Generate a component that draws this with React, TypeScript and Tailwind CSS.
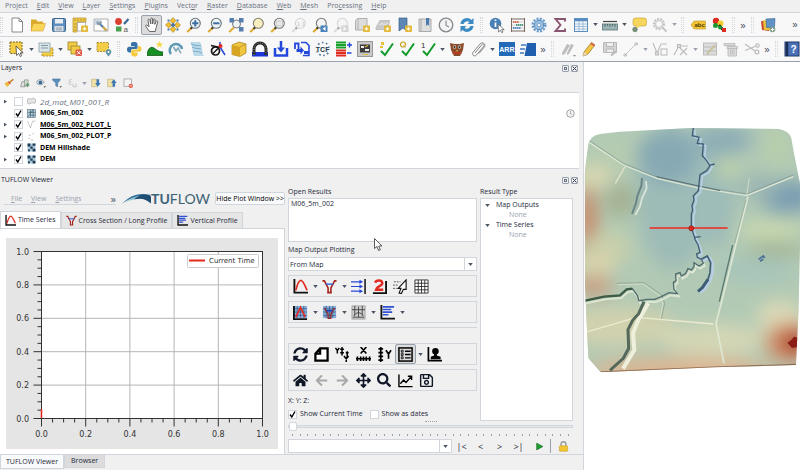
import { useState } from "react";
import type { ReactNode } from "react";
import clsx from "clsx";
import {
  FaArrowLeft,
  FaArrowRight,
  FaArrowsAlt,
  FaHome,
  FaRegSave,
  FaSearch,
  FaSyncAlt,
} from "react-icons/fa";

const badge = (
  <g>
    <rect x="9" y="8.5" width="7" height="6.5" rx="1" fill="#e3b93c" />
    <path d="M12.5 10v3.6M10.7 11.8h3.6" stroke="#fffbe2" strokeWidth="1.2" />
  </g>
);

const lens = (stroke: string, handle: string, fill = "#eef3f6") => (
  <g>
    <path d="M6 10.5 1.2 15" stroke={handle} strokeWidth="2.2" />
    <path d="M6 10.5 4.6 11.8" stroke="#333" strokeWidth="2.2" />
    <circle cx="9.3" cy="6.3" r="5" fill={fill} stroke={stroke} strokeWidth="1.1" />
  </g>
);

const check = <path d="M3 10 7 14 15 2.5" fill="none" stroke="#129a2b" strokeWidth="2" />;

const funnel = (
  <g fill="none">
    <path d="M.5 2h2l4 7.500v5M15.500 2h-2l-4 7.500v5M5.500 14.500h5" stroke="#a3231c" strokeWidth="1.700" />
    <path d="M4 5.500h8" stroke="#2f62d9" strokeWidth="1.500" />
  </g>
);

const mesh = (
  <g>
    <rect x="1" y="1" width="14" height="13" fill="#86b0dd" />
    <path d="M1 4h14M1 7.5h14M1 11h14M4.5 1v13M8 1v13M11.5 1v13" stroke="#2a4468" strokeWidth=".6" />
  </g>
);

const icons: Record<string, ReactNode> = {
  new: (
    <path d="M3 1h7l3.5 3.5V15H3zM10 1v3.5h3.5" fill="#fff" stroke="#8a8a8a" strokeWidth="1" />
  ),
  open: (
    <g>
      <path d="M1 2.5h5l1.5 2H13V14H1z" fill="#dba92c" />
      <path d="M3 6.5h12.5L13 14H1z" fill="#f8d65a" stroke="#d5a32a" strokeWidth=".6" />
    </g>
  ),
  save: (
    <g>
      <rect x="1.5" y="1.5" width="13" height="13" rx="1" fill="#5d8fc0" stroke="#3c668f" />
      <rect x="4" y="2" width="8" height="4.5" fill="#e9eef2" />
      <rect x="3.5" y="9" width="9" height="5.5" fill="#d9dfe4" />
      <path d="M5 11h6M5 12.8h6" stroke="#7b8892" strokeWidth=".7" />
    </g>
  ),
  layout: (
    <g>
      <path d="M1 1h13v4H5v10H1z" fill="#f1cc4d" stroke="#b28d28" strokeWidth=".7" />
      <path d="M5.5 5.5h8V14h-8z" fill="#fff" stroke="#999" strokeWidth=".7" />
      <path d="M3 2v2M6 2v2M9 2v2M12 2v2M2 7h2M2 10h2M2 13h2" stroke="#8a6a17" strokeWidth=".6" />
      {badge}
    </g>
  ),
  layouts: (
    <g>
      <path d="M1 2h14v12H1z" fill="#fff" stroke="#999" strokeWidth=".8" />
      <path d="M2 3h6L5 8H2z" fill="#c5d5e3" />
      <path d="m6 6 7.5 7.5" stroke="#5984ad" strokeWidth="2.2" />
      <path d="M4 4.2a2.6 2.6 0 1 0 3.6-.8L7 5.5z" fill="#8b9aa7" />
      <path d="m10 10 3.5 3.5" stroke="#dfb13a" strokeWidth="2" />
    </g>
  ),
  styles: (
    <g>
      <circle cx="4.5" cy="4.5" r="3.4" fill="#d9402f" />
      <path d="m10 7 4.5-5" stroke="#3d6894" strokeWidth="2.2" />
      <rect x="2" y="9.5" width="5.5" height="5" fill="#4aa04d" />
      <text x="9.5" y="14.5" fontSize="8" fill="#555">a</text>
    </g>
  ),
  hand: (
    <path d="M5.5 14.5 1.8 9.3c-.6-1 .7-1.8 1.5-1L5 9.8 4 3.3c0-1.2 1.5-1.4 1.8-.2L6.8 7V2c0-1.3 1.8-1.3 1.8 0v5l.8-4.3c.3-1.1 1.8-.9 1.7.3L10.8 7.4l1.3-3c.5-1 1.9-.5 1.6.7l-1.5 5.4-1 4z" fill="#fff" stroke="#555" strokeWidth=".9" />
  ),
  pan: (
    <g fill="#f0bd33">
      <path d="m8 .5 3 3.2L8 7 5 3.700zM8 9l3 3.200L8 15.500l-3-3.300zM.5 8l3.200-3L7 8l-3.300 3zM9 8l3.300-3L15.500 8l-3.200 3z" stroke="#97721b" strokeWidth=".5" />
      <path d="M8 5.500 10.500 8 8 10.500 5.500 8z" fill="#4a79aa" />
      <path d="M2.500 2.500h2v2h-2zM11.500 2.500h2v2h-2zM2.500 11.500h2v2h-2zM11.500 11.500h2v2h-2z" fill="#4a79aa" />
    </g>
  ),
  zoomIn: (
    <g>
      {lens("#69737a", "#e0ab35")}
      <path d="M9.300 3.200v6.200M6.200 6.300h6.200" stroke="#3a6da3" strokeWidth="2" />
    </g>
  ),
  zoomOut: (
    <g>
      {lens("#69737a", "#e0ab35")}
      <path d="M6.200 6.300h6.200" stroke="#3a6da3" strokeWidth="2" />
    </g>
  ),
  zoomFull: (
    <g>
      <path d="M6 10.500 1.200 15" stroke="#e0ab35" strokeWidth="2" />
      <circle cx="8.500" cy="7" r="4" fill="#eef3f6" stroke="#777" />
      <path d="M1.500 1h4.500v4.500H1.500zM11 1h4.500v4.500H11zM11 10h4.500v4.500H11z" fill="#557fac" />
    </g>
  ),
  zoomSel: lens("#7d7d6a", "#e0ab35", "#f7edc0"),
  zoomLayer: (
    <g>
      {lens("#777", "#e0ab35", "#f4f4f4")}
      <path d="M6 4h6.500v5H6z" fill="#e4e8ea" stroke="#aaa" strokeWidth=".5" />
    </g>
  ),
  zoomNative: (
    <g opacity=".45">
      {lens("#aaa", "#bbb", "#f2f2f2")}
      <text x="6" y="8.800" fontSize="6" fill="#888">1:1</text>
    </g>
  ),
  zoomLast: (
    <g>
      {lens("#777", "#e0ab35", "#f4f4f4")}
      <rect x="8.500" y="8.500" width="7" height="6.500" fill="#4a83ba" />
      <path d="m13.500 9.500-3 2.300 3 2.200z" fill="#fff" />
    </g>
  ),
  zoomNext: (
    <g opacity=".45">
      {lens("#aaa", "#bbb", "#f2f2f2")}
      <rect x="8.500" y="8.500" width="7" height="6.500" fill="#aaa" />
      <path d="m10.500 9.500 3 2.300-3 2.200z" fill="#fff" />
    </g>
  ),
  mapView: (
    <g>
      <path d="M1.500 3.500 3.500 1.500h9.500v11.500h-11.500z" fill="#dcdcdc" stroke="#a0a0a0" strokeWidth=".8" />
      <path d="M4 2v11" stroke="#b5b5b5" />
      {badge}
    </g>
  ),
  view3d: (
    <g>
      <path d="M1 10.500 5 3.500h9.500l-1.500 9H1z" fill="#c9c9c9" stroke="#aaa" strokeWidth=".6" />
      <path d="M4 8c2-3 6 1 9-2" fill="none" stroke="#eee" />
      {badge}
    </g>
  ),
  bookmarkNew: (
    <g>
      <path d="M3 1h8v13l-4-3-4 3z" fill="#5c86b4" stroke="#3b618b" strokeWidth=".7" />
      {badge}
    </g>
  ),
  bookmarks: (
    <g>
      <path d="M2 2h12v12.500H2z" fill="#dedede" stroke="#999" strokeWidth=".8" />
      <path d="M4 2v12" stroke="#aaa" />
      <path d="M9 1h3.200v8l-1.600-1.500L9 9z" fill="#4b7aad" />
    </g>
  ),
  clock: (
    <g fill="none" stroke="#82888c">
      <circle cx="8" cy="8" r="6.800" fill="#f4f4f4" strokeWidth="1.300" />
      <path d="M8 3.500V8.500l3 1.500" strokeWidth="1.100" />
    </g>
  ),
  refresh: (
    <g fill="#3c8ac2">
      <path d="M1.500 7A6.500 6.500 0 0 1 12.500 3L14.500 1v6h-6l2-2A4 4 0 0 0 4.500 7z" />
      <path d="M14.500 9A6.500 6.500 0 0 1 3.500 13l-2 2V9h6l-2 2a4 4 0 0 0 6-2z" />
    </g>
  ),
  info: (
    <g>
      <circle cx="6.500" cy="6.500" r="5.800" fill="#4a80b8" />
      <path d="M6.500 5.500v4.500M6.500 2.500v1.600" stroke="#fff" strokeWidth="1.700" />
      <path d="m9 7 .500 8 1.900-1.800 1.300 2.500 1.300-.7-1.300-2.400h2.500z" fill="#fff" stroke="#555" strokeWidth=".7" />
    </g>
  ),
  abacus: (
    <g fill="none">
      <path d="M1.500 1v14M14.500 1v14M1.500 2h13M1.500 14h13" stroke="#7d6a63" />
      <path d="M2 5h12M2 8h12M2 11h12" stroke="#bbb" strokeWidth=".6" />
      <path d="M3 5h6" stroke="#d66f56" strokeWidth="2" strokeDasharray="1.500 .5" />
      <path d="M6 8h7" stroke="#4f9a83" strokeWidth="2" strokeDasharray="1.500 .5" />
      <path d="M3 11h8" stroke="#5b8fc4" strokeWidth="2" strokeDasharray="1.500 .5" />
    </g>
  ),
  gear: (
    <g>
      <circle cx="8" cy="8" r="6.300" fill="none" stroke="#6a9ccb" strokeWidth="2.400" strokeDasharray="2 1.300" />
      <circle cx="8" cy="8" r="4.700" fill="#9bc1e2" stroke="#4f83b6" strokeWidth="1" />
      <circle cx="8" cy="8" r="1.800" fill="#f4f7f9" stroke="#4f83b6" strokeWidth=".6" />
    </g>
  ),
  sigma: <path d="M13 4.500V2H3.500l5 6-5 6H13v-2.500" fill="none" stroke="#8a5570" strokeWidth="1.900" />,
  table: (
    <g>
      <rect x="1.500" y="1.500" width="13" height="13" fill="#f4f8fb" stroke="#5b8dc0" />
      <path d="M2 3h12" stroke="#5b8dc0" strokeWidth="2.600" />
      <path d="M2 7h12M2 9.500h12M2 12h12M6 4v10M10 4v10" stroke="#8db1d3" strokeWidth=".8" />
    </g>
  ),
  ruler: (
    <g>
      <path d="M1 4.500h14" stroke="#444" strokeWidth="1.200" />
      <rect x=".5" y="7" width="15" height="6" fill="#9cb4b5" stroke="#5e7577" strokeWidth=".8" />
      <path d="M3 7v3M5.500 7v2M8 7v3M10.500 7v2M13 7v3" stroke="#40595b" strokeWidth=".7" />
    </g>
  ),
  tip: (
    <g>
      <rect x="2" y="1" width="13.500" height="8" rx="2.500" fill="#f6d65c" stroke="#c6a02c" strokeWidth=".6" />
      <path d="m6 8-1 4 5-3.500z" fill="#f6d65c" />
      <circle cx="4" cy="12.500" r="2.300" fill="#7c957f" stroke="#506d58" strokeWidth=".6" />
    </g>
  ),
  locator: (
    <g fill="none" stroke="#c4c4c4">
      <circle cx="7" cy="7" r="5" strokeWidth="2.200" strokeDasharray="2 1" />
      <circle cx="7" cy="7" r="3.500" />
      <path d="m10.500 10.500 4 4" strokeWidth="2" />
    </g>
  ),
  abc: (
    <g>
      <path d="M1 8 4 4h11.500v8H4z" fill="#f2c437" stroke="#c09821" strokeWidth=".6" />
      <text x="4.500" y="10.300" fontSize="6" fontWeight="700" fill="#4b3b08">abc</text>
    </g>
  ),
  diagram: (
    <g>
      <circle cx="5" cy="4" r="3.200" fill="#de2b20" />
      <circle cx="9.500" cy="6.500" r="3" fill="#f2cc2c" />
      <circle cx="4.500" cy="8.500" r="2.500" fill="#189a30" />
      <path d="M8 8 13 14" stroke="#111" strokeWidth="2.600" />
      <rect x="11" y="11" width="4" height="4" fill="#de2b20" />
      <circle cx="9" cy="10.500" r="2" fill="#189a30" />
    </g>
  ),
  dataSource: (
    <g>
      <path d="m1 4 9 1-1 9-7-1z" fill="#c9492f" />
      <path d="m3 3 8 1-1 9H4z" fill="#ecc23c" />
      <path d="m6 2 9-.500-.500 9H6.500z" fill="#5f93c8" stroke="#38638f" strokeWidth=".6" />
      <circle cx="12.500" cy="12.500" r="2.800" fill="#7d9e8a" />
      <path d="M12.500 10.800v3.400M10.800 12.500h3.400" stroke="#fff" />
    </g>
  ),
  select: (
    <g>
      <rect x="1" y="1" width="12" height="11.500" fill="#f3cd46" stroke="#7e6b2a" strokeWidth="1" strokeDasharray="2 1" />
      <path d="m7 5 .500 9.500 2.200-2 1.500 3 1.500-.800-1.500-2.800h3z" fill="#fff" stroke="#444" strokeWidth=".8" />
    </g>
  ),
  selectForm: (
    <g>
      <rect x="4" y="7" width="11" height="8" fill="#f3cd46" stroke="#9a802c" strokeWidth=".8" strokeDasharray="2 1" />
      <rect x="1" y="2" width="11" height="9" fill="#dce5e8" stroke="#8aa0a7" strokeWidth=".8" />
      <path d="M3 4.500h7M3 7h7" stroke="#819aa8" strokeWidth="1.200" />
    </g>
  ),
  deselect: (
    <g>
      <rect x="1" y="1" width="9" height="8" fill="#f3cd46" stroke="#9a802c" strokeWidth=".8" />
      <rect x="4" y="5" width="9" height="8" fill="#f3cd46" stroke="#9a802c" strokeWidth=".8" />
      <rect x="8.500" y="8.500" width="6.500" height="6.500" rx="1" fill="#e05a4c" />
      <path d="m10 10 3.500 3.500M13.500 10 10 13.500" stroke="#fff" />
    </g>
  ),
  selectLoc: (
    <g>
      <rect x="1" y="1.500" width="11.500" height="9" fill="#f3cd46" stroke="#9a802c" strokeWidth=".8" strokeDasharray="2 1" />
      <path d="M12.500 15.500c-1.500-2-2.800-3-2.800-4.500a2.800 2.800 0 0 1 5.600 0c0 1.500-1.300 2.500-2.800 4.500z" fill="#5f93a8" />
      <circle cx="12.500" cy="11" r="1" fill="#fff" />
    </g>
  ),
  python: (
    <g>
      <path d="M8 1C5 1 5 2.300 5 3.500V5h3.500v.800H3C1.500 5.800 1 7.300 1 8.700 1 10.500 2 11.500 3.500 11.500H5V9.500C5 8.500 6 8 7 8h3c1 0 1.500-.700 1.500-1.500v-3C11.500 1.500 10 1 8 1z" fill="#3873a8" />
      <path d="M8.500 15.500c3 0 3-1.300 3-2.500v-1.500H8v-.800h5.500c1.500 0 2-1.500 2-2.900 0-1.800-1-2.800-2.500-2.800h-1v2.500C12 8 11 8.500 10 8.500H7c-1 0-1.700.7-1.700 1.500v3c0 1.800 1.300 2.500 3.200 2.500z" fill="#f5cb3f" />
    </g>
  ),
  terrain: (
    <g>
      <path d="M0 13.500C1 7 4 5 7 7s4 3.500 9 4v3.500H0z" fill="#168f23" stroke="#0c4c12" strokeWidth=".7" />
      <path d="m12.500 0 .900 2.300 2.600.200-2 1.700.6 2.500-2.100-1.500-2.300 1.500.7-2.500-2-1.700 2.600-.200z" fill="#f5d74a" />
    </g>
  ),
  swirl: (
    <g fill="none">
      <path d="M3 13A6.200 6.200 0 1 1 14 8" stroke="#5d99b5" strokeWidth="2.500" />
      <path d="m5.500 6 2.500 4 2-3 3 5.500" stroke="#7ca6b6" strokeWidth="1.500" />
    </g>
  ),
  sheet: (
    <g>
      <path d="M1 1h10c3 4 1 9 4 14H5C3 10 4 6 1 1z" fill="#bcd9e8" />
      <path d="M2 3c4 2 6 1 10 2M3 6c4 2 6 1 9 2M4 10c3 1 6 0 9 2" fill="none" stroke="#6da8ca" strokeWidth=".9" />
    </g>
  ),
  node: (
    <g fill="none" stroke="#161616">
      <circle cx="5.500" cy="10" r="4" strokeWidth="1.700" />
      <path d="m3 12.500 5-5M1 4.500 10 6.500" strokeWidth="1.500" />
      <path d="M10 1v5l5 8" stroke="#2546d8" strokeWidth="1.500" />
      <circle cx="10.500" cy="5" r="2" fill="#e02b20" stroke="none" />
    </g>
  ),
  cube: (
    <g>
      <path d="M1 4 8 1l7 2v9l-6 3.500-8-2z" fill="#f0c640" stroke="#a4801c" strokeWidth=".7" />
      <path d="m1 4 8 2v9.500l-8-2z" fill="#d7a521" />
      <path d="m9 6 6-3" fill="none" stroke="#c1962a" />
    </g>
  ),
  culvert: (
    <g>
      <rect y="11" width="16" height="4.500" fill="#1b35d6" />
      <path d="M2 14V8a6 6 0 0 1 12 0v6" fill="none" stroke="#262626" strokeWidth="3" />
      <path d="M2 14V8a6 6 0 0 1 12 0v6" fill="none" stroke="#999" strokeDasharray="1 1.500" />
    </g>
  ),
  download: (
    <g fill="none" stroke="#2448dc" strokeWidth="2.500">
      <path d="M2 7v7.500h12V7M8 0v8" />
      <path d="M4 6.500h8L8 11.500z" fill="#2448dc" stroke="none" />
    </g>
  ),
  downloadFile: (
    <g>
      <path d="M1 8V2.500h3.500V8" fill="none" stroke="#2448dc" strokeWidth="1.800" />
      <path d="M2.500 8h4V5.500L10 9.500l-3.500 4V11h-4z" fill="#2448dc" />
      <path d="M7 1.500h5l3 3V14.500H9" fill="none" stroke="#2448dc" strokeWidth="1.600" />
      <path d="M10 11.500h5" stroke="#2448dc" strokeWidth="3" />
    </g>
  ),
  tcf: (
    <g>
      <circle cx="8" cy="8" r="6.500" fill="none" stroke="#54799b" strokeWidth="1.700" strokeDasharray="1.600 2.500" />
      <rect y="5.500" width="16" height="5" fill="#f6f6f6" />
      <text x=".8" y="10.500" fontSize="7" fontWeight="700" fill="#223a50">TCF</text>
    </g>
  ),
  bands: (
    <g>
      <path d="M0 1.500h10M0 4h10M0 6.500h10" stroke="#18a22c" strokeWidth="2" />
      <path d="M0 9.500h10M0 12h10M0 14.500h10" stroke="#df2b20" strokeWidth="2" />
      <path d="M11 4h5M13.500 1.500v5M11 12h4.500" stroke="#2546d8" strokeWidth="1.500" />
    </g>
  ),
  terminal: (
    <g>
      <rect x=".5" y=".5" width="15" height="15" fill="#c9c9c9" stroke="#999" />
      <rect x="3" y="3.500" width="10" height="8" fill="#3c3c3c" />
      <path d="M4 5h3v2H4zM8 8h4v2H8z" fill="#eee" />
      <path d="m8 6 3-1.500M6 13.500h5" stroke="#e0b93d" strokeWidth="1.200" />
    </g>
  ),
  checkDb: (
    <g>
      {check}
      <path d="M3 1h3v3H3zM2 5h3v2H2z" fill="#e9bf3e" />
    </g>
  ),
  checkQ: (
    <g>
      {check}
      <circle cx="4" cy="3.500" r="2.500" fill="none" stroke="#c7a021" strokeWidth="1.200" />
      <path d="m4.500 4.500 2 2" stroke="#c7a021" />
    </g>
  ),
  checkOne: (
    <g>
      {check}
      <text x="1" y="6.500" fontSize="8" fill="#333">1</text>
    </g>
  ),
  owl: (
    <g>
      <path d="m1 2 4 1h6l4-1-1 7-3 6H5L2 9z" fill="#8a4b2b" />
      <circle cx="5.500" cy="6" r="1.700" fill="#e7d8c7" />
      <circle cx="10.500" cy="6" r="1.700" fill="#e7d8c7" />
      <circle cx="5.500" cy="6" r="1" fill="#222" />
      <circle cx="10.500" cy="6" r="1" fill="#222" />
      <path d="m7 9 1 2 1-2z" fill="#e6b33c" />
      <path d="M3.500 12h9" stroke="#c23a2a" strokeWidth="1.500" />
    </g>
  ),
  clip: (
    <path d="m5 12 7-8.500c1-1.300 3 .2 2 1.500L6.500 14c-2 2.200-5.300-.3-3.500-2.700L10 3c2.500-3 6.500.3 4.200 3.200L9 12.500" fill="none" stroke="#8a8a8a" strokeWidth="1" />
  ),
  arr: (
    <g>
      <rect y="1" width="16" height="14" fill="#2269b8" />
      <text x=".3" y="11" fontSize="7" fontWeight="700" fill="#fff">ARR</text>
    </g>
  ),
  speed: (
    <g fill="#1f5fae">
      <path d="M7 2h9v13H4.500z" />
      <path d="M1 4h5M0 8h5M0 12h4" stroke="#3d79bf" strokeWidth="1.300" />
    </g>
  ),
  edits: (
    <g fill="#bdbdbd">
      <path d="m2 12 5-9 3 1-5 9-3 1zM7 12l4-9 3 1-5 9-2 1z" />
      <path d="M13 14h3l-1.500 1.800z" fill="#888" />
    </g>
  ),
  pencil: (
    <g>
      <path d="M3 11 10.500 1.500l3.500 2.500L6.500 13.500 2 15z" fill="#f2c645" stroke="#93701d" strokeWidth=".7" />
      <path d="m3 11 3.500 2.500L2 15z" fill="#e8d5bb" />
      <path d="m10.500 1.500 3.500 2.500-1.200 1.600-3.500-2.500z" fill="#d96552" />
    </g>
  ),
  saveEdits: (
    <g fill="none" stroke="#b9b9b9">
      <path d="M1.500 1.500h13v10h-13z" fill="#d4d4d4" />
      <path d="M4.500 2v3.500h7V2M4.500 11V8h7v3" fill="#eee" />
      <path d="m9 14.500 5-4" strokeWidth="2" />
    </g>
  ),
  line: (
    <g stroke="#c3c3c3">
      <path d="M2 14 13 3" />
      <path d="M1 13h2.500v2H1zM12 2h2.500v2H12z" fill="#d5d5d5" />
    </g>
  ),
  vertex: (
    <g fill="none" stroke="#bdbdbd" strokeWidth="1.100">
      <path d="m1 2 4 10 4-9h6" />
      <rect x="9" y="8" width="6" height="6" />
      <path d="M3.500 11h3v3h-3z" fill="#ddd" />
    </g>
  ),
  nodeTool: (
    <g fill="none" stroke="#bdbdbd" strokeWidth="1.200">
      <path d="m1 14 5-9h9M6 3v4M7 7l7 7M14 7l-7 7" />
      <path d="M4.500 3.500h3v3h-3z" fill="#ddd" />
    </g>
  ),
  attrs: (
    <g>
      <rect x="1.500" y="2" width="13" height="12" fill="#ddd" stroke="#bbb" />
      <path d="M2 6h12M2 10h12" stroke="#bbb" />
      <path d="m5 13 8-9" stroke="#c8c39d" strokeWidth="2.200" />
    </g>
  ),
  trash: (
    <g fill="#dcdcdc" stroke="#bcbcbc" strokeWidth=".9">
      <path d="M1 2.500h11v2H1zM4 5.500h10.500v2H4zM5 7.500h8.500V15H5z" />
      <path d="M7.500 8.500v5M9.300 8.500v5M11 8.500v5" />
    </g>
  ),
  scissors: (
    <g fill="none" stroke="#bdbdbd" strokeWidth="1.200">
      <path d="m1 3 10 7M1 9.500 12 5" />
      <circle cx="13" cy="11" r="1.900" />
      <circle cx="13.500" cy="4.500" r="1.700" />
    </g>
  ),
  help: (
    <g>
      <rect x="1" y="1" width="14" height="14" fill="#4871b8" stroke="#20396b" />
      <path d="M3 1v14" stroke="#1b2c50" strokeWidth="2.500" />
      <text x="6.500" y="12" fontSize="10" fontWeight="700" fill="#fff">?</text>
    </g>
  ),
  // layer panel
  brush: (
    <g>
      <path d="m1 8 5-2 3 4-3 4C3 13 2 11 1 8z" fill="#ecb93a" />
      <path d="m6 6 3 4 2-1-3-4z" fill="#d5432e" />
      <path d="m9 7 6-5" stroke="#c58023" strokeWidth="2.500" />
    </g>
  ),
  addGroup: (
    <g>
      <path d="M3 6h5v8H1z" fill="#e0e4e0" stroke="#777" />
      <path d="M7 3h6v10H7z" fill="#cfd9cf" stroke="#7d8b7d" />
      <path d="M12 8v6M9 11h6" stroke="#5d9463" strokeWidth="2" />
    </g>
  ),
  eye: (
    <g>
      <path d="M0 7c4-6 10-6 13 0-3 5-9 5-13 0z" fill="#dfe6ea" stroke="#6b7c85" />
      <circle cx="7" cy="7" r="3" fill="#3d6a92" />
      <path d="M12 13h4l-2 2.500z" fill="#444" />
    </g>
  ),
  filter: (
    <g>
      <path d="M1 1.500h12v2L9 8v6l-3-1.500V8L1 3.500z" fill="#5b8fc1" stroke="#3c6890" strokeWidth=".8" />
      <path d="M12 13h4l-2 2.500z" fill="#444" />
    </g>
  ),
  expr: (
    <g fill="none" stroke="#bbb" strokeWidth="1.200">
      <path d="M6 2.500C1 1 1 6.500 5 6c-5 0-5 6 1 4M8 9v5h5V9" />
    </g>
  ),
  expand: (
    <g>
      <path d="M1 2h9v12H1z" fill="#efe1a6" stroke="#a99b62" strokeWidth=".7" />
      <path d="M9 2h4v6h2.500L11 14 6.500 8H9z" fill="#3d78b3" />
    </g>
  ),
  collapse: (
    <g>
      <path d="M1 2h9v12H1z" fill="#efe1a6" stroke="#a99b62" strokeWidth=".7" />
      <path d="M9 14h4V8h2.500L11 2 6.500 8H9z" fill="#3d78b3" />
    </g>
  ),
  remove: (
    <g>
      <path d="M1.500 1.500h12v12h-12z" fill="#f4f4f4" stroke="#8a8a8a" />
      <circle cx="12.500" cy="12.500" r="3.500" fill="#e35844" />
      <path d="M10.500 12.500h4" stroke="#fff" strokeWidth="1.200" />
    </g>
  ),
  polygon: <path d="M1 4c3-3 5 1 8-1s6 0 6 2v5c-2 3-5-1-8 1s-6 2-6-1z" fill="#e5e5e5" stroke="#999" />,
  meshLayer: (
    <g>
      <rect x="1" y="1" width="14" height="14" fill="#b9d0da" stroke="#4a6a7c" />
      <path d="M1 6h14M6 1v14M11 1v14M1 15 11 1M6 11h9" stroke="#3d5d70" strokeWidth="1.200" />
    </g>
  ),
  lineLayer: <path d="m1 2 5 12 4-12h5" fill="none" stroke="#9c9c9c" strokeWidth="1" />,
  points: <path d="M3 10h2v2H3zM4 5h2v2H4zM10 2h2v2h-2zM8 13h2v2H8z" fill="#aaa" />,
  raster: (
    <g>
      <rect x="1" y="1" width="14" height="14" fill="#a9c6d8" />
      <path d="M1 1h5v5H1zM10 1h5v4h-5zM6 6h4v4H6zM10 10h5v5h-5zM2 11h3v4H2z" fill="#1e3c55" />
    </g>
  ),
  // plot toolbars
  series: (
    <g fill="none">
      <path d="M1.500 0v14.500H16" stroke="#111" strokeWidth="2" />
      <path d="M3 12C5 4 7 1.500 8.500 1.500S12 5 15 12" stroke="#e32a20" strokeWidth="1.800" />
    </g>
  ),
  section: funnel,
  flow: (
    <g stroke="#2748da" fill="#2748da">
      <path d="M0 3h10M0 8h10M0 13h10" strokeWidth="1.300" />
      <path d="m9 .800 4 2.200-4 2.200zM9 5.800 13 8l-4 2.200zM9 10.800l4 2.200-4 2.200z" stroke="none" />
      <path d="M15 0v16" stroke="#111" strokeWidth="1.600" />
    </g>
  ),
  two: (
    <g fill="none">
      <path d="M1 15h14V2" stroke="#111" strokeWidth="2" />
      <path d="M3.500 4C4 1.500 6 1.500 7.500 1.500c4 0 4.500 4 1.500 5.500C6.500 8.500 4.500 9 4.200 11.500h7.800" stroke="#e32a20" strokeWidth="2.600" />
    </g>
  ),
  cursor: (
    <g>
      <path d="M1 3h7M0 6.500h6M0 10h4" stroke="#555" strokeWidth="1" strokeDasharray="2 1" />
      <path d="M14 1 5.500 10h3L6.500 15l2.500.500 2-4.500h3z" fill="#fff" stroke="#111" strokeWidth="1.200" />
    </g>
  ),
  grid: (
    <path d="M1 1h14v14H1zM1 4.500h14M1 8h14M1 11.500h14M4.500 1v14M8 1v14M11.500 1v14" fill="#fff" stroke="#222" strokeWidth=".9" />
  ),
  seriesMesh: (
    <g fill="none">
      {mesh}
      <path d="M1 1v14h14" stroke="#111" strokeWidth="2" />
      <path d="m3 13 5-10.500L13 13" stroke="#e32a20" strokeWidth="1.800" />
    </g>
  ),
  sectionMesh: (
    <g fill="none">
      {mesh}
      <path d="m2.500 3 4 6.500v4.500M13.500 3l-4 6.500v4.500M6 14.300h4" stroke="#8f2a2a" strokeWidth="1.500" />
      <path d="M5 6h6" stroke="#173fc0" strokeWidth="1.800" />
    </g>
  ),
  curtain: (
    <g fill="none" stroke="#444">
      <rect x="1" y="1" width="14" height="14" fill="#cfcfcf" stroke="#888" strokeWidth=".7" />
      <path d="M4 1v10M12 1v10M1 5h14M8 2v11M3 12c2-5 8-5 10 0M2 13h12" />
    </g>
  ),
  vertical: (
    <g>
      <path d="M1.500 0v14.500H16" fill="none" stroke="#111" strokeWidth="2" />
      <path d="M3 2h12M3 4.800h9M3 7.600h10M3 10.400h6" stroke="#3151d4" strokeWidth="1.800" />
    </g>
  ),
  clearPlot: <path d="M6.500 1.500H14.500V14.500H1.500V7zM6.500 1.500V7H1.500" fill="#fff" stroke="#000" strokeWidth="2.400" />,
  axesYY: (
    <g fill="none" stroke="#000" strokeWidth="1.600">
      <path d="m.5 1 2 3 2-3M2.500 4v3M7.500 0v9M5.500 2.500h4M5.500 6h4M13 4.500V11M11.500 6h3M9.500 9.500l2.500 3 2.500-3M12 12.500V16" />
    </g>
  ),
  axesX: (
    <g fill="none" stroke="#000" strokeWidth="1.800">
      <path d="m5 0 6 7M11 0 5 7M0 12.500h16M1.500 10v5M5 10v5M8 10v5M11 10v5M14.500 10v5" />
    </g>
  ),
  axesY: (
    <g fill="none" stroke="#000" strokeWidth="1.800">
      <path d="M4 0v16M1.500 2h5M1.500 6h5M1.500 10h5M1.500 14h5M9.500 3.500 12.300 7.500 15 3.500M12.300 7.500v5" />
    </g>
  ),
  legend: (
    <g fill="none" stroke="#000">
      <rect x="1" y="1" width="14" height="14" strokeWidth="1.600" />
      <path d="M7.500 4.500h6M7.500 8h6M7.500 11.500h6" strokeWidth="1.400" />
      <path d="M3.500 3.500h2v2h-2zM3.500 7h2v2h-2zM3.500 10.500h2v2h-2z" strokeWidth=".9" />
    </g>
  ),
  user: (
    <g>
      <path d="M1.500 0v14.500H16" fill="none" stroke="#000" strokeWidth="1.800" />
      <circle cx="9" cy="4.500" r="3.500" />
      <path d="M7.500 6h3v3l4 1.500V13H4v-2.500L7.500 9z" />
    </g>
  ),
  chart: (
    <path d="M1 1.500v13h14.500M2.500 11.500 6 7.500l2.500 2.500L13.500 4.500M10.500 3.500h4v4" fill="none" stroke="#000" strokeWidth="1.500" />
  ),
  lock: (
    <g>
      <path d="M4.500 8V4.500a3.500 3.500 0 0 1 7 0V8" fill="none" stroke="#9b9b9b" strokeWidth="2" />
      <rect x="2" y="7" width="12" height="8" rx="1" fill="#f3c52f" stroke="#bd9420" strokeWidth=".7" />
    </g>
  ),
  play: <path d="m3 2 11 6-11 6z" fill="#18a22c" stroke="#0d5217" strokeWidth="1" />,
  home: <FaHome size={16} />,
  back: <FaArrowLeft size={14} x="1" y="1" color="#a8a8a8" />,
  forward: <FaArrowRight size={14} x="1" y="1" color="#a8a8a8" />,
  move: <FaArrowsAlt size={16} />,
  search: <FaSearch size={15} />,
  floppy: <FaRegSave size={16} />,
  sync: <FaSyncAlt size={16} />,
};

function Icon({ name, className = "size-4" }: { name: string; className?: string }) {
  return (
    <svg viewBox="0 0 16 16" className={clsx("shrink-0 font-['Liberation_Sans',sans-serif]", className)} aria-hidden="true">
      {icons[name]}
    </svg>
  );
}

function Arrow({ dim }: { dim?: boolean }) {
  return (
    <svg viewBox="0 0 6 4" className={clsx("h-[3px] w-[5px]", dim ? "fill-gray-400" : "fill-gray-600")} aria-hidden="true">
      <path d="M0 0h6L3 4z" />
    </svg>
  );
}

function ToolButton({ name, active, iconClass }: { name: string; active?: boolean; iconClass?: string }) {
  return (
    <button
      type="button"
      aria-label={name}
      className={clsx(
        "flex h-5 w-[21px] shrink-0 items-center justify-center rounded-[2px]",
        active && "border border-gray-400 bg-[#dcdcdc] text-black"
      )}
    >
      <Icon name={name} className={iconClass} />
    </button>
  );
}

const Grip = () => <span className="mx-[3px] h-4 w-[3px] shrink-0 border-x border-dotted border-gray-300 first:ml-0" />;

// "v" is a drop-down arrow, "|" a grip, ">>" the overflow button
function Tools({ items, active, iconClass }: { items: string[]; active?: string; iconClass?: string }) {
  return (
    <>
      {items.map((item, i) => {
        if (item === "v" || item === "V")
          return (
            <button key={i} type="button" aria-label="More options" className="flex h-5 w-2 shrink-0 items-center justify-center">
              <Arrow dim={item === "V"} />
            </button>
          );
        if (item === "|") return <Grip key={i} />;
        if (item === ">>")
          return (
            <button key={i} type="button" className="w-[10px] shrink-0 text-[11px] leading-3 text-gray-600">
              »
            </button>
          );
        return <ToolButton key={i} name={item} active={item === active} iconClass={iconClass} />;
      })}
    </>
  );
}

const menus = ["Project", "Edit", "View", "Layer", "Settings", "Plugins", "Vector", "Raster", "Database", "Web", "Mesh", "Processing", "Help"];
const accel: Record<string, number> = { Project: 3, Vector: 4, Processing: 3 };

function MenuLabel({ text }: { text: string }) {
  const at = accel[text] ?? 0;
  return (
    <>
      {text.slice(0, at)}
      <u>{text[at]}</u>
      {text.slice(at + 1)}
    </>
  );
}

const layers = [
  { name: "2d_mat_M01_001_R", icon: "polygon", expandable: true, on: false },
  { name: "M06_5m_002", icon: "meshLayer", expandable: false, on: true },
  { name: "M06_5m_002_PLOT_L", icon: "lineLayer", expandable: true, on: true, current: true },
  { name: "M06_5m_002_PLOT_P", icon: "points", expandable: true, on: true },
  { name: "DEM Hillshade", icon: "raster", expandable: false, on: true },
  { name: "DEM", icon: "raster", expandable: true, on: true },
];

function CheckBox({ id, checked, onChange }: { id: string; checked: boolean; onChange: () => void }) {
  return (
    <span className="relative flex size-[9px] shrink-0">
      <input
        id={id}
        type="checkbox"
        checked={checked}
        onChange={onChange}
        className="size-[9px] appearance-none border border-gray-300 bg-white"
      />
      {checked && (
        <svg viewBox="0 0 9 9" className="pointer-events-none absolute inset-0 fill-none stroke-black" aria-hidden="true">
          <path d="m2 4.500 1.800 2.500L7 1.500" strokeWidth="1.400" />
        </svg>
      )}
    </span>
  );
}

function PanelTitle({ children }: { children: ReactNode }) {
  return (
    <div className="flex h-3 items-center justify-between pl-px pr-[5px]">
      <h2>{children}</h2>
      <div className="flex gap-[2px]">
        <button type="button" aria-label="Float panel" className="flex size-[7px] items-center justify-center rounded-[1px] border border-gray-400">
          <span className="size-[3px] border border-gray-500" />
        </button>
        <button type="button" aria-label="Close panel" className="flex size-[7px] items-center justify-center rounded-[1px] border border-gray-400">
          <svg viewBox="0 0 5 5" className="size-[5px] stroke-gray-700" aria-hidden="true">
            <path d="m.5.5 4 4M4.500.5l-4 4" />
          </svg>
        </button>
      </div>
    </div>
  );
}

function LayersPanel() {
  const [visible, setVisible] = useState(layers.map((l) => l.on));
  const toggle = (i: number) => setVisible(visible.map((v, j) => (j === i ? !v : v)));

  return (
    <section>
      <PanelTitle>Layers</PanelTitle>
      <div className="flex h-[18px] items-center pl-px">
        {["brush", "addGroup", "eye", "filter", "expr", "v", "expand", "collapse", "remove"].map((name, i) =>
          name === "v" ? (
            <span key={i} className="flex w-[7px] justify-center">
              <Arrow dim />
            </span>
          ) : (
            <button key={i} type="button" aria-label={name} className="flex w-4 justify-center">
              <Icon name={name} className="size-[10px]" />
            </button>
          )
        )}
      </div>
      <ul className="mr-1 grid h-[77px] auto-rows-fr border-y border-gray-300 bg-white py-[3px]">
        {layers.map((layer, i) => (
          <li key={layer.name} className="flex items-center pl-1">
            <span className="w-[10px]">
              {layer.expandable && (
                <svg viewBox="0 0 4 5" className="h-[5px] w-[3px] fill-gray-600" aria-hidden="true">
                  <path d="M0 0v5l4-2.500z" />
                </svg>
              )}
            </span>
            <CheckBox id={`layer-${i}`} checked={visible[i]} onChange={() => toggle(i)} />
            <Icon name={layer.icon} className="mx-1 size-[9px]" />
            <label
              htmlFor={`layer-${i}`}
              className={clsx(
                layer.on ? "font-bold text-black" : "text-[8px] italic text-gray-500",
                layer.current && "underline"
              )}
            >
              {layer.name}
            </label>
            {i === 1 && <Icon name="clock" className="ml-auto mr-1 size-[9px]" />}
          </li>
        ))}
      </ul>
    </section>
  );
}

function Plot() {
  const left = 35.5;
  const top = 13.5;
  const width = 221;
  const height = 167;
  const steps = Array.from({ length: 21 }, (_, i) => i);

  return (
    <svg viewBox="0 0 272 211" className="w-full bg-[#e5e5e5] font-['DejaVu_Sans',sans-serif] text-[8px]" role="img" aria-label="Time series plot">
      <rect x={left} y={top} width={width} height={height} fill="#fff" />
      {[1, 2, 3, 4].map((n) => (
        <path
          key={n}
          d={`M${left + (width * n) / 5} ${top}v${height}M${left} ${top + (height * n) / 5}h${width}`}
          stroke="#b5b5b5"
          strokeWidth="1"
        />
      ))}
      <rect x={left} y={top} width={width} height={height} fill="none" stroke="#333" strokeWidth="1" />
      {steps.map((n) => {
        const len = n % 4 === 0 ? 8 : 4;
        return (
          <path
            key={n}
            d={`M${left + (width * n) / 20} ${top + height}v${len}M${left} ${top + (height * n) / 20}h${-len}`}
            stroke="#333"
          />
        );
      })}
      {[0, 1, 2, 3, 4, 5].map((n) => (
        <g key={n} fill="#333">
          <text x={left + (width * n) / 5} y="199" textAnchor="middle">
            {(n / 5).toFixed(1)}
          </text>
          <text x="23" y={top + height - (height * n) / 5 + 3} textAnchor="end">
            {(n / 5).toFixed(1)}
          </text>
        </g>
      ))}
      <path d="M35.500 171v9" stroke="#e3281c" strokeWidth="1.500" />
      <rect x="181.500" y="16.500" width="71" height="13" rx="1" fill="#fff" stroke="#ccc" />
      <path d="M183 22.500h16" stroke="#e3281c" strokeWidth="2" />
      <text x="203" y="25" fill="#333" className="text-[7px]">
        Current Time
      </text>
    </svg>
  );
}

function Logo() {
  return (
    <svg viewBox="0 0 90 16" className="h-4 w-[90px] shrink-0" role="img" aria-label="TUFLOW">
      <path d="M0 13C8 4 17 1 29 4l-2 2C17 3 8 7 0 13z" fill="#2b6c97" />
      <path d="M4 11.500C12 4.500 20 3.500 28 6.500l1 5C23 6.500 15 5.500 4 11.500z" fill="#6fb4c6" />
      <path d="M12 8.500c7-2 12-.500 17 4v-7c-6-3-12-2-17 3z" fill="#1f4e73" />
      <text x="29" y="13" fontSize="14" className="fill-[#3d6175] font-['Lato',sans-serif]">
        <tspan fontWeight="700">TU</tspan>
        <tspan>FLOW</tspan>
      </text>
    </svg>
  );
}

const plotTabs = [
  { name: "Time Series", icon: "series" },
  { name: "Cross Section / Long Profile", icon: "section" },
  { name: "Vertical Profile", icon: "vertical" },
];

function PlotPane() {
  const [tab, setTab] = useState("Time Series");

  return (
    <div className="flex w-[285px] shrink-0 flex-col">
      <div className="flex h-[25px] items-center">
        <nav className="ml-1 mr-[6px] flex h-3 w-[112px] items-center gap-[9px] border-b border-gray-300 pl-[7px] text-gray-400">
          {["File", "View", "Settings"].map((m) => (
            <button key={m} type="button" className="leading-none">
              <MenuLabel text={m} />
            </button>
          ))}
          <button type="button" className="ml-auto text-[11px] leading-none text-gray-600">»</button>
        </nav>
        <Logo />
        <button type="button" className="ml-auto h-[13px] whitespace-nowrap rounded-[2px] border border-gray-300 bg-gray-50 leading-none text-black">
          Hide Plot Window &gt;&gt;
        </button>
      </div>
      <div role="tablist" className="flex h-[17px] items-end">
        {plotTabs.map((t) => (
          <button
            key={t.name}
            type="button"
            role="tab"
            aria-selected={tab === t.name}
            onClick={() => setTab(t.name)}
            className={clsx(
              "flex items-center gap-[2px] whitespace-nowrap border border-b-0 border-gray-300 px-1",
              tab === t.name ? "h-[17px] bg-white" : "h-4 bg-[#e6e6e6]"
            )}
          >
            <Icon name={t.icon} className="size-[11px]" />
            {t.name}
          </button>
        ))}
      </div>
      <div className="flex-1 border-r border-t border-gray-300 bg-white px-[6px] pt-[9px]">
        <Plot />
      </div>
    </div>
  );
}

function ToolBox({ items, active }: { items: string[]; active?: string }) {
  return (
    <div className="mb-1 flex h-[22px] items-center border border-gray-300 pl-px text-gray-900">
      <Tools items={items} active={active} iconClass="size-[15px]" />
    </div>
  );
}

function ResultType() {
  return (
    <div className="mr-[10px] flex flex-1 flex-col">
      <h3 className="h-3 leading-3">Result Type</h3>
      <ul className="flex-1 border border-gray-300 bg-white pl-1 pt-px">
        {["Map Outputs", "Time Series"].map((group) => (
          <li key={group}>
            <div className="flex items-center gap-[6px]">
              <Arrow />
              {group}
            </div>
            <div className="pl-6 text-gray-400">None</div>
          </li>
        ))}
      </ul>
    </div>
  );
}

function Controls() {
  const [showTime, setShowTime] = useState(true);
  const [showDates, setShowDates] = useState(false);
  const [time, setTime] = useState(0);

  return (
    <div className="flex min-w-0 flex-1 flex-col pl-[3px]">
      <div className="flex gap-[3px]">
        <div className="w-[189px] shrink-0">
          <h3 className="h-3 leading-3">Open Results</h3>
          <ul className="h-[44px] border border-gray-300 bg-white px-[2px]">
            <li>M06_5m_002</li>
          </ul>
          <label htmlFor="plotting" className="block h-[15px] leading-[15px]">
            Map Output Plotting
          </label>
          <div className="relative mb-1 h-[14px]">
            <select id="plotting" className="h-full w-full appearance-none border border-gray-300 bg-white px-px leading-none">
              <option>From Map</option>
            </select>
            <span className="pointer-events-none absolute inset-y-px right-px flex w-3 items-center justify-center border-l border-gray-300">
              <Arrow />
            </span>
          </div>
          <ToolBox items={["series", "v", "section", "v", "flow", "two", "cursor", "grid"]} />
          <ToolBox items={["seriesMesh", "v", "sectionMesh", "v", "curtain", "v", "vertical", "v"]} />
          <div className="h-4 border-t border-gray-300" />
          <ToolBox items={["sync", "clearPlot", "axesYY", "axesX", "axesY", "legend", "v", "user"]} active="legend" />
          <ToolBox items={["home", "back", "forward", "move", "search", "chart", "floppy"]} />
          <p className="h-3 leading-3">X: Y: Z:</p>
          <div className="flex h-[14px] items-center gap-[3px]">
            <CheckBox id="show-time" checked={showTime} onChange={() => setShowTime(!showTime)} />
            <label htmlFor="show-time" className="mr-1">Show Current Time</label>
            <CheckBox id="show-dates" checked={showDates} onChange={() => setShowDates(!showDates)} />
            <label htmlFor="show-dates">Show as dates</label>
          </div>
        </div>
        <ResultType />
      </div>
      <div className="mr-[10px]">
        <div className="mx-auto h-px w-3 border-t border-dotted border-gray-400" />
        <input
          type="range"
          aria-label="Time step"
          min="0"
          max="30"
          value={time}
          onChange={(e) => setTime(Number(e.target.value))}
          className="block h-[9px] w-full appearance-none bg-transparent [&::-webkit-slider-runnable-track]:h-[3px] [&::-webkit-slider-runnable-track]:border [&::-webkit-slider-runnable-track]:border-gray-300 [&::-webkit-slider-runnable-track]:bg-gray-200 [&::-webkit-slider-thumb]:-mt-1 [&::-webkit-slider-thumb]:h-[9px] [&::-webkit-slider-thumb]:w-2 [&::-webkit-slider-thumb]:appearance-none [&::-webkit-slider-thumb]:rounded-[2px] [&::-webkit-slider-thumb]:border [&::-webkit-slider-thumb]:border-gray-300 [&::-webkit-slider-thumb]:bg-white"
        />
        <div className="flex h-2 items-center justify-between px-1">
          {Array.from({ length: 37 }, (_, i) => (
            <span key={i} className="h-[2px] w-px bg-gray-400" />
          ))}
        </div>
      </div>
      <div className="flex h-[14px] items-center text-[9px]">
        <div className="relative h-[14px] w-[164px]">
          <select aria-label="Time" className="block h-full w-full appearance-none border border-gray-300 bg-white">
            <option></option>
          </select>
          <span className="pointer-events-none absolute inset-y-px right-px flex w-3 items-center justify-center border-l border-gray-300">
            <Arrow />
          </span>
        </div>
        {["|<", "<", ">", ">|"].map((t) => (
          <button key={t} type="button" className="w-[19px] leading-none">
            {t}
          </button>
        ))}
        <button type="button" aria-label="Play" className="flex w-[22px] justify-center">
          <Icon name="play" className="size-[9px]" />
        </button>
        <span className="h-[14px] w-px bg-gray-400" />
        <button type="button" aria-label="Lock" className="flex w-6 justify-center">
          <Icon name="lock" className="size-[11px]" />
        </button>
      </div>
    </div>
  );
}

function Viewer() {
  return (
    <section className="flex flex-1 flex-col pt-[5px]">
      <PanelTitle>TUFLOW Viewer</PanelTitle>
      <div className="flex flex-1 border-b border-gray-300">
        <PlotPane />
        <Controls />
      </div>
      <div role="tablist" className="flex h-[15px] items-start">
        <button type="button" role="tab" aria-selected="true" className="h-[14px] border border-t-0 border-gray-300 bg-gray-50 px-[5px]">
          TUFLOW Viewer
        </button>
        <button type="button" role="tab" aria-selected="false" className="h-[13px] border border-t-0 border-gray-300 bg-[#dcdcdc] px-[6px]">
          Browser
        </button>
      </div>
    </section>
  );
}

const creek =
  "M340 24 337 47 357 52 352 70 370 72 367 107 380 122 390 137 380 152 360 164 357 192 355 212 340 227 342 240 336 257 338 270 334 282 334 322 342 347 346 360 354 374 360 397 350 402 352 412 364 418";
const meander =
  "M364 418 370 430 357 438 342 428 342 440 334 450 324 446 317 460 304 468 300 458 287 462 288 482 280 488 282 508 292 521 267 518 244 530 224 538 202 538 177 542 172 526 157 506 140 508 120 526 72 530 15 542";
const branch = "M364 418 382 408 392 428 390 458 384 478 367 503 354 514";

function TerrainMap() {
  return (
    <svg viewBox="0 0 216 408" className="w-full" role="img" aria-label="Terrain map">
      <defs>
        <clipPath id="extent">
          <path d="M14 160 24 80Q26 48 60 42L120 35 335 24 595 27Q628 32 634 55L642 100 660 190V380L656 560 648 735 400 742 62 757 25 715 15 500z" />
        </clipPath>
        <filter id="soft" x="-50%" y="-50%" width="200%" height="200%" colorInterpolationFilters="sRGB">
          <feGaussianBlur stdDeviation="26" />
        </filter>
        <filter id="edge">
          <feGaussianBlur stdDeviation="1.500" />
        </filter>
      </defs>
      <g transform="translate(-4 58) scale(.3333)">
        <g clipPath="url(#extent)">
          <rect width="670" height="780" fill="#b2cab5" />
          <g filter="url(#soft)">
            <ellipse cx="280" cy="230" rx="110" ry="220" fill="#9dbbb7" />
            <ellipse cx="410" cy="210" rx="60" ry="180" fill="#9ebcb8" />
            <ellipse cx="260" cy="110" rx="90" ry="80" fill="#87a9b4" />
            <ellipse cx="430" cy="60" rx="90" ry="40" fill="#8cacb6" />
            <ellipse cx="625" cy="230" rx="85" ry="50" fill="#7c9eb2" />
            <ellipse cx="540" cy="200" rx="60" ry="40" fill="#9bb6b2" />
            <ellipse cx="90" cy="110" rx="80" ry="50" fill="#b5cbb0" />
            <ellipse cx="40" cy="170" rx="60" ry="36" fill="#d9d8b2" />
            <ellipse cx="22" cy="300" rx="30" ry="100" fill="#c98b6a" />
            <ellipse cx="120" cy="240" rx="44" ry="50" fill="#a4b08f" />
            <ellipse cx="85" cy="380" rx="70" ry="50" fill="#c6cfab" />
            <ellipse cx="50" cy="430" rx="60" ry="40" fill="#d8d2ab" />
            <ellipse cx="40" cy="500" rx="60" ry="24" fill="#cc9678" />
            <ellipse cx="440" cy="145" rx="30" ry="36" fill="#c0d2a8" />
            <ellipse cx="590" cy="80" rx="30" ry="60" fill="#b9cfa9" />
            <ellipse cx="570" cy="330" rx="100" ry="26" fill="#cbd8ad" />
            <ellipse cx="590" cy="390" rx="90" ry="16" fill="#9fae8c" />
            <ellipse cx="520" cy="450" rx="120" ry="34" fill="#a5c4bb" />
            <ellipse cx="110" cy="620" rx="180" ry="60" fill="#d1d1ae" />
            <ellipse cx="400" cy="660" rx="160" ry="50" fill="#d3d6b5" />
            <ellipse cx="300" cy="750" rx="280" ry="36" fill="#deb490" />
            <ellipse cx="600" cy="590" rx="70" ry="50" fill="#dad8b6" />
            <ellipse cx="630" cy="670" rx="72" ry="58" fill="#d08c68" />
            <ellipse cx="645" cy="668" rx="36" ry="26" fill="#a03c26" />
          </g>
          <path d="M622 668l12-8 8-10 16 4v26l-22 4z" fill="#8b1f17" filter="url(#edge)" />
          <g fill="none" filter="url(#edge)">
            <path d="M28 62 130 130 230 170 350 198 500 222 640 165" stroke="#dce6d3" strokeWidth="4" transform="translate(0 5)" />
            <path d="M28 62 130 130 230 170 350 198 500 222 640 165" stroke="#7d9490" strokeWidth="2" />
            <path d="M230 170 420 212" stroke="#596f74" strokeWidth="3" />
            <path d="M135 140 106 190" stroke="#e0e2ca" strokeWidth="4" />
            <path d="M504 230 466 380 425 545 408 610 432 730" stroke="#dfe8d3" strokeWidth="5" />
            <path d="M498 240 464 370" stroke="#8ca398" strokeWidth="2" />
            <path d="M458 375 418 545" stroke="#5c7a70" strokeWidth="4" />
            <path d="m500 225 8-50" stroke="#cfdcc8" strokeWidth="3" />
            <path d="M15 637 170 592 400 612" stroke="#ecebd0" strokeWidth="4" />
            <path d="M110 490 192 488 244 524 254 550 244 596" stroke="#94a898" strokeWidth="3" />
            <path d="M112 494 190 492 240 528 249 552 240 596" stroke="#dfe7cf" strokeWidth="2" />
            <path d={meander} stroke="#dbe6d2" strokeWidth="6" transform="translate(4 8)" />
            <path d="M192 180l2 22-14 30-6 24-14 26" stroke="#dbe7dc" strokeWidth="5" transform="translate(6 3)" />
            <path d="M186 174l-2 24-12 30-4 22-12 32" stroke="#6a8587" strokeWidth="6" />
            <path d="M205 550l-30 50-16 40 4 50-34 56" stroke="#eef0dc" strokeWidth="12" />
            <path d="M192 545l-16 36-18 20-14 28 2 56-16 30-40 36" stroke="#55685c" strokeWidth="9" />
            <path d={creek} stroke="#b9cfe6" strokeWidth="5" transform="translate(7 5)" />
            <path d={branch} stroke="#b9cfe6" strokeWidth="7" transform="translate(7 4)" />
          </g>
          <g fill="none" stroke="#405d78">
            <path d={creek} strokeWidth="4" />
            <path d={branch} strokeWidth="5" />
            <path d="M384 478 367 503 354 514" strokeWidth="9" />
            <path d={meander} stroke="#4f6b6c" strokeWidth="4" />
            <path d="M157 506 140 508 120 526 72 530 15 542" stroke="#3c5c48" strokeWidth="7" />
            <path d="M344 352l18-2M388 136l16-4" strokeWidth="4" />
            <path d="m536 418 14-10 4 6M540 424l10-6" stroke="#4a6f96" strokeWidth="5" />
          </g>
          <path d="M62 756 400 742 648 734" stroke="#6d3d25" strokeWidth="5" fill="none" opacity=".6" />
        </g>
        <path d="M209 324h234" stroke="#ef2a1f" strokeWidth="4" />
        <circle cx="334" cy="325" r="7.500" fill="#e3261c" stroke="#6d1d18" strokeWidth="2" />
      </g>
    </svg>
  );
}

export default function App() {
  return (
    <div className="flex h-screen flex-col overflow-hidden bg-[#f0f0f0] font-['Open_Sans','Noto_Sans',sans-serif] text-[7px] leading-[10px] text-gray-800">
      <nav className="flex h-3 shrink-0 items-center gap-[9px] pl-[5px] text-gray-500">
        {menus.map((m) => (
          <button key={m} type="button">
            <MenuLabel text={m} />
          </button>
        ))}
      </nav>
      <div className="flex h-[25px] shrink-0 items-center border-y border-gray-300 bg-[#f8f8f8]">
        <Tools
          active="hand"
          items={["|", "new", "open", "save", "layout", "layouts", "styles", "|", "hand", "pan", "zoomIn", "zoomOut", "zoomFull", "zoomSel", "zoomLayer", "zoomNative", "zoomLast", "zoomNext", "mapView", "view3d", "bookmarkNew", "bookmarks", "clock", "refresh", "|", "info", "abacus", "gear", "sigma", "table", "v", "ruler", "v", "tip", "locator", "V", "|", "abc", "diagram", "|", ">>", "|", "dataSource"]}
        />
        <span className="ml-auto">
          <Tools items={[">>"]} />
        </span>
      </div>
      <div className="flex h-[25px] shrink-0 items-center border-b border-gray-400 bg-[#f8f8f8]">
        <Tools
          items={["|", "select", "v", "selectForm", "v", "deselect", "v", "selectLoc", "|", "python", "terrain", "swirl", "sheet", "node", "cube", "culvert", "download", "downloadFile", "tcf", "bands", "terminal", "checkDb", "checkQ", "checkOne", "v", "owl", "clip", "v", "arr", "speed", ">>", "|", "edits", "pencil", "saveEdits", "line", "V", "vertex", "nodeTool", "V", "attrs", "trash", "scissors", ">>", "|", "help"]}
        />
      </div>
      <main className="relative flex min-h-0 flex-1">
        <div className="flex w-[73%] shrink-0 flex-col border-r border-gray-300">
          <LayersPanel />
          <Viewer />
        </div>
        <div className="flex-1 bg-white">
          <TerrainMap />
        </div>
        <svg viewBox="0 0 9 13" className="pointer-events-none absolute left-[374px] top-[176px] h-[13px] w-[9px]" aria-hidden="true">
          <path d="M.5.5v10l2.500-2 1.600 4 1.700-.700-1.600-3.800H8z" fill="#fff" stroke="#333" strokeWidth=".8" />
        </svg>
      </main>
    </div>
  );
}
